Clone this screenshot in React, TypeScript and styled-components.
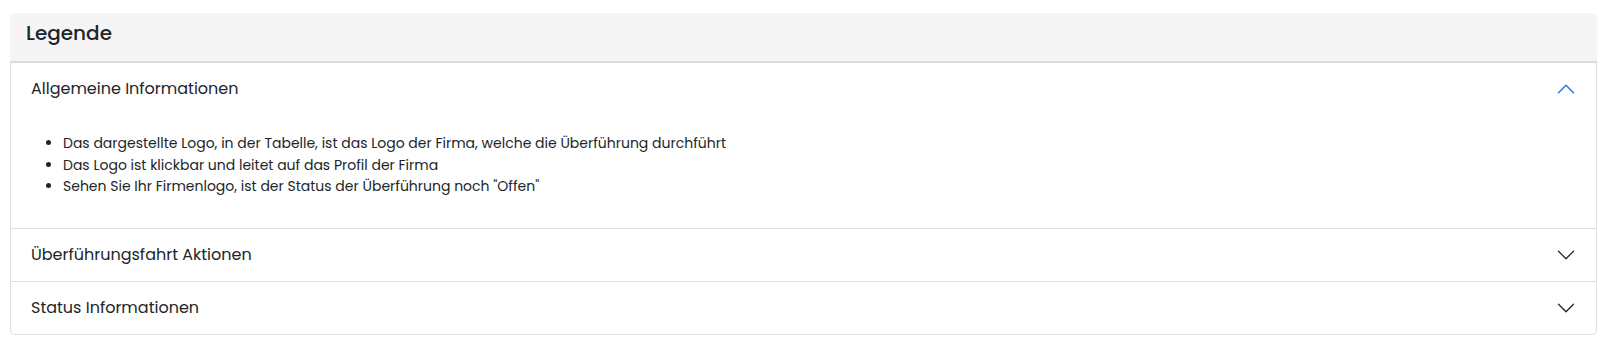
import React, { FC, useState } from 'react'
import styled, { createGlobalStyle } from 'styled-components'

interface ILegendSection {
	id: string
	title: string
	items: string[]
}

const sections: ILegendSection[] = [
	{
		id: 'general',
		title: 'Allgemeine Informationen',
		items: [
			'Das dargestellte Logo, in der Tabelle, ist das Logo der Firma, welche die Überführung durchführt',
			'Das Logo ist klickbar und leitet auf das Profil der Firma',
			'Sehen Sie Ihr Firmenlogo, ist der Status der Überführung noch "Offen"',
		],
	},
	{
		id: 'actions',
		title: 'Überführungsfahrt Aktionen',
		items: [],
	},
	{
		id: 'status',
		title: 'Status Informationen',
		items: [],
	},
]

const Chevron: FC<{ open: boolean }> = ({ open }) => (
	<ChevronIcon $open={open} viewBox="0 0 16 16" fill="currentColor" aria-hidden="true">
		<path
			fillRule="evenodd"
			d="M1.646 4.646a.5.5 0 0 1 .708 0L8 10.293l5.646-5.647a.5.5 0 0 1 .708.708l-6 6a.5.5 0 0 1-.708 0l-6-6a.5.5 0 0 1 0-.708z"
		/>
	</ChevronIcon>
)

const App: FC = () => {
	const [openId, setOpenId] = useState<string | null>('general')

	const toggle = (id: string) => {
		setOpenId(current => (current === id ? null : id))
	}

	return (
		<>
			<GlobalStyle />
			<Page>
				<Card>
					<CardHeader>Legende</CardHeader>
					<Accordion>
						{sections.map(section => {
							const isOpen = openId === section.id

							return (
								<AccordionItem key={section.id}>
									<AccordionButton type="button" onClick={() => toggle(section.id)}>
										<span>{section.title}</span>
										<Chevron open={isOpen} />
									</AccordionButton>
									{isOpen && (
										<AccordionBody>
											<List>
												{section.items.map((item, index) => (
													<ListItem key={index}>{item}</ListItem>
												))}
											</List>
										</AccordionBody>
									)}
								</AccordionItem>
							)
						})}
					</Accordion>
				</Card>
			</Page>
		</>
	)
}

export default App

const GlobalStyle = createGlobalStyle`
	* {
		box-sizing: border-box;
	}

	body {
		margin: 0;
		background: #fff;
		color: #212529;
		font-family: Poppins, Inter, 'Noto Sans', sans-serif;
	}
`

const Page = styled.div`
	padding: 13px 11px 19px 10px;
`

const Card = styled.section`
	display: flex;
	flex-direction: column;
	border-radius: 5px;
`

const CardHeader = styled.h2`
	margin: 0;
	padding: 8px 16px 16px;
	font-size: 20px;
	line-height: 24px;
	font-weight: 500;
	color: #212529;
	background-color: #f5f5f5;
	border-radius: 5px 5px 0 0;
	border-bottom: 2px solid #dcdcdc;
`

const Accordion = styled.div`
	border: 1px solid #dfdfdf;
	border-top: 0;
	border-radius: 0 0 5px 5px;
	background: #fff;
`

const AccordionItem = styled.div`
	& + & {
		border-top: 1px solid #dfdfdf;
	}
`

const AccordionButton = styled.button`
	display: flex;
	align-items: center;
	justify-content: space-between;
	width: 100%;
	padding: 16px 20px;
	border: 0;
	background: transparent;
	font-family: inherit;
	font-size: 16px;
	line-height: 20px;
	color: #212529;
	text-align: left;
	cursor: pointer;
`

const ChevronIcon = styled.svg<{ $open: boolean }>`
	flex-shrink: 0;
	width: 20px;
	height: 20px;
	color: ${({ $open }) => ($open ? '#1c6ee8' : '#212529')};
	transform: ${({ $open }) => ($open ? 'rotate(180deg)' : 'none')};
`

const AccordionBody = styled.div`
	padding: 0 20px 16.5px;
`

const List = styled.ul`
	margin: 18px 0 14px;
	padding-left: 32px;
`

const ListItem = styled.li`
	font-size: 14px;
	line-height: 21.5px;
	color: #212529;
`
